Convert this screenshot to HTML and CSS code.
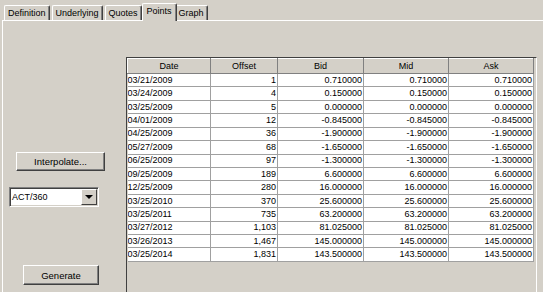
FILE: index.html
```html
<!DOCTYPE html>
<html lang="en">
<head>
  <meta charset="UTF-8" />
  <title>Points</title>
  <link rel="stylesheet" href="styles.css">
</head>
<body>
  <div class="tabs">
    <div class="tab">Definition</div>
    <div class="tab">Underlying</div>
    <div class="tab">Quotes</div>
    <div class="tab active">Points</div>
    <div class="tab">Graph</div>
  </div>

  <div class="panel">
    <div class="side">
      <button class="btn btn-interp">Interpolate...</button>
      <div class="combo">
        <span class="combo-text">ACT/360</span>
        <span class="combo-arrow"><span class="tri"></span></span>
      </div>
      <button class="btn btn-gen">Generate</button>
    </div>

    <div class="scroll">
      <table class="grid">
        <colgroup>
          <col style="width:83px"><col style="width:67px"><col style="width:86px"><col style="width:85px"><col style="width:85px">
        </colgroup>
        <thead>
          <tr><th>Date</th><th>Offset</th><th>Bid</th><th>Mid</th><th>Ask</th></tr>
        </thead>
        <tbody>
          <tr><td class="l">03/21/2009</td><td>1</td><td>0.710000</td><td>0.710000</td><td>0.710000</td></tr>
          <tr><td class="l">03/24/2009</td><td>4</td><td>0.150000</td><td>0.150000</td><td>0.150000</td></tr>
          <tr><td class="l">03/25/2009</td><td>5</td><td>0.000000</td><td>0.000000</td><td>0.000000</td></tr>
          <tr><td class="l">04/01/2009</td><td>12</td><td>-0.845000</td><td>-0.845000</td><td>-0.845000</td></tr>
          <tr><td class="l">04/25/2009</td><td>36</td><td>-1.900000</td><td>-1.900000</td><td>-1.900000</td></tr>
          <tr><td class="l">05/27/2009</td><td>68</td><td>-1.650000</td><td>-1.650000</td><td>-1.650000</td></tr>
          <tr><td class="l">06/25/2009</td><td>97</td><td>-1.300000</td><td>-1.300000</td><td>-1.300000</td></tr>
          <tr><td class="l">09/25/2009</td><td>189</td><td>6.600000</td><td>6.600000</td><td>6.600000</td></tr>
          <tr><td class="l">12/25/2009</td><td>280</td><td>16.000000</td><td>16.000000</td><td>16.000000</td></tr>
          <tr><td class="l">03/25/2010</td><td>370</td><td>25.600000</td><td>25.600000</td><td>25.600000</td></tr>
          <tr><td class="l">03/25/2011</td><td>735</td><td>63.200000</td><td>63.200000</td><td>63.200000</td></tr>
          <tr><td class="l">03/27/2012</td><td>1,103</td><td>81.025000</td><td>81.025000</td><td>81.025000</td></tr>
          <tr><td class="l">03/26/2013</td><td>1,467</td><td>145.000000</td><td>145.000000</td><td>145.000000</td></tr>
          <tr><td class="l">03/25/2014</td><td>1,831</td><td>143.500000</td><td>143.500000</td><td>143.500000</td></tr>
        </tbody>
      </table>
    </div>
  </div>
</body>
</html>
```

FILE: styles.css
```css
body {
  margin: 0;
  width: 543px;
  height: 292px;
  overflow: hidden;
  background-color: #d4d0c8;
  font-family: "Liberation Sans", Arial, sans-serif;
  font-size: 9px;
  color: #000;
}
.tabs {
  display: flex;
  align-items: flex-end;
  height: 20px;
  padding-left: 4px;
}
.tab {
  position: relative;
  height: 14px;
  line-height: 14px;
  padding: 0 3px;
  margin-right: 2px;
  border-top: 1px solid #fff;
  border-left: 1px solid #fff;
  border-right: 1px solid #404040;
  box-shadow: inset -1px 0 0 #808080;
  border-radius: 2px 2px 0 0;
}
.tab.active {
  height: 16px;
  line-height: 14px;
  margin: 0 0 -1px -2px;
  padding: 0 4px 1px 4px;
  background-color: #d4d0c8;
  z-index: 1;
}
.tab.active + .tab {
  margin-left: -2px;
}
.panel {
  display: flex;
  height: 271px;
  margin-left: 2px;
  border-top: 1px solid #fff;
  border-left: 1px solid #fff;
}
.side {
  width: 123px;
  display: flex;
  flex-direction: column;
  align-items: flex-start;
}
.btn {
  font-family: inherit;
  font-size: 9.5px;
  color: #000;
  background-color: #d4d0c8;
  padding: 0;
  border: 1px solid;
  border-color: #fff #404040 #404040 #fff;
  box-shadow: inset -1px -1px 0 #808080;
}
.btn-interp {
  width: 89px;
  height: 19px;
  margin: 131px 0 0 13px;
}
.btn-gen {
  width: 76px;
  height: 20px;
  margin: 58px 0 0 20px;
}
.combo {
  display: flex;
  width: 90px;
  height: 20px;
  margin: 16px 0 0 6px;
  box-sizing: border-box;
  background: #fff;
  border: 1px solid;
  border-color: #808080 #fff #fff #808080;
  box-shadow: inset 1px 1px 0 #404040, inset -1px -1px 0 #d4d0c8;
}
.combo-text {
  flex: 1;
  padding: 2px 0 0 2px;
  line-height: 14px;
}
.combo-arrow {
  width: 16px;
  margin: 1px 1px 1px 0;
  box-sizing: border-box;
  background: #d4d0c8;
  border: 1px solid;
  border-color: #fff #404040 #404040 #fff;
  display: flex;
  align-items: center;
  justify-content: center;
}
.tri {
  width: 0;
  height: 0;
  border-left: 4px solid transparent;
  border-right: 4px solid transparent;
  border-top: 4px solid #000;
}
.scroll {
  width: 411px;
  height: 240px;
  margin-top: 36px;
  box-sizing: border-box;
  border-top: 1px solid #404040;
  border-left: 1px solid #404040;
  border-right: 1px solid #fff;
  overflow: hidden;
}
.grid {
  border-collapse: collapse;
  table-layout: fixed;
  width: 406px;
}
.grid th {
  height: 15px;
  padding: 0;
  font-weight: normal;
  text-align: center;
  background-color: #d4d0c8;
  border: 1px solid #808080;
  border-top-color: #fff;
  border-left-color: #fff;
  box-sizing: border-box;
}
.grid td {
  height: 13.43px;
  padding: 0 1px 0 1px;
  text-align: right;
  background-color: #fff;
  border: 1px solid #a0a0a0;
  border-top: none;
  border-left: none;
  line-height: 11px;
  white-space: nowrap;
  overflow: hidden;
  box-sizing: border-box;
}
.grid td.l {
  text-align: left;
  padding-left: 0;
}
```
